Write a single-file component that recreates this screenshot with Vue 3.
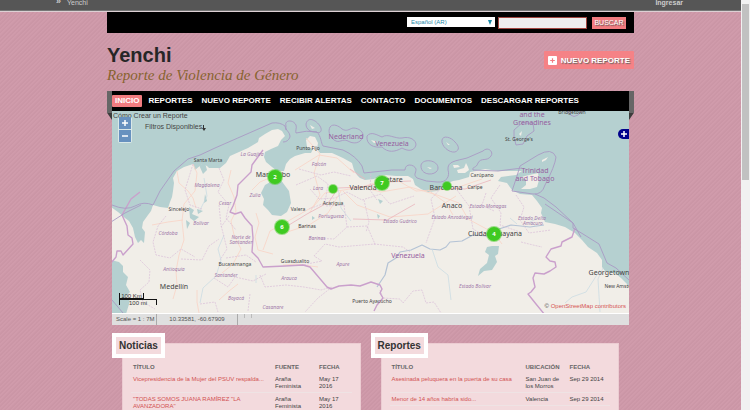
<script setup>
const menu = ['INICIO', 'REPORTES', 'NUEVO REPORTE', 'RECIBIR ALERTAS', 'CONTACTO', 'DOCUMENTOS', 'DESCARGAR REPORTES']

const panels = [
  {
    title: 'Noticias',
    kind: 'news',
    head: ['TÍTULO', 'FUENTE', 'FECHA'],
    rows: [
      ['Vicepresidencia de la Mujer del PSUV respalda...', 'Araña Feminista', 'May 17 2016'],
      ['"TODAS SOMOS JUANA RAMÍREZ "LA AVANZADORA"', 'Araña Feminista', 'May 17 2016']
    ]
  },
  {
    title: 'Reportes',
    kind: 'reports',
    head: ['TÍTULO', 'UBICACIÓN', 'FECHA'],
    rows: [
      ['Asesinada peluquera en la puerta de su casa', 'San Juan de los Morros', 'Sep 29 2014'],
      ['Menor de 14 años habría sido...', 'Valencia', 'Sep 29 2014'],
      ['Asesinada otra mujer...', 'San Juan', 'Sep 18 2014']
    ]
  }
]

const labels = [
  ['state', 252, 156, 'La Guajira'], ['state', 207, 187, 'Magdalena'], ['state', 225, 205, 'Cesar'],
  ['state', 255, 197, 'Zulia'], ['state', 319, 166, 'Falcón'], ['state', 318, 190, 'Lara'],
  ['state', 201, 225, 'Bolívar'], ['state', 168, 235, 'Córdoba'], ['state', 241, 239, 'Norte de'],
  ['state', 241, 244, 'Santander'], ['state', 174, 271, 'Antioquia'], ['state', 226, 277, 'Santander'],
  ['state', 236, 300, 'Boyacá'], ['state', 273, 309, 'Casanare'], ['state', 289, 280, 'Arauca'],
  ['state', 331, 218, 'Portuguesa'], ['state', 317, 240, 'Barinas'], ['state', 343, 266, 'Apure'],
  ['state', 400, 223, 'Estado Guárico'], ['state', 452, 219, 'Estado Anzoátegui'],
  ['state', 488, 208, 'Estado Monagas'], ['state', 532, 220, 'Estado Delta'], ['state', 533, 225, 'Amacuro'],
  ['state', 475, 288, 'Estado Bolívar'],
  ['town', 208, 162, 'Santa Marta'], ['town', 179, 211, 'Sincelejo'], ['town', 308, 150, 'Punto Fijo'],
  ['town', 333, 205, 'Acarigua'], ['town', 298, 211, 'Valera'], ['town', 307, 228, 'Barinas'],
  ['town', 295, 263, 'Guasdualito'], ['town', 235, 266, 'Bucaramanga'], ['town', 372, 303, 'Puerto Ayacucho'],
  ['town', 482, 177, 'Carúpano'], ['town', 475, 189, 'Caripe'], ['town', 519, 141, "St. George's"],
  ['town', 572, 114, 'Bridgetown'], ['town', 624, 288, 'New Amsterdam'],
  ['city', 273, 177, 'Maracaibo'], ['city', 363, 190, 'Valencia'], ['city', 392, 182, 'Petare'],
  ['city', 446, 190, 'Barcelona'], ['city', 452, 208, 'Anaco'], ['city', 495, 236, 'Ciudad Guayana'],
  ['city', 174, 289, 'Medellín'], ['city', 609, 275, 'Georgetown'],
  ['country', 346, 139, 'Nederland'], ['country', 392, 146, 'Venezuela'], ['country', 408, 258, 'Venezuela'],
  ['country', 532, 117, 'and the'], ['country', 532, 125, 'Grenadines'],
  ['country', 535, 173, 'Trinidad'], ['country', 535, 181, 'and Tobago']
]

const clusters = [
  { x: 275, y: 177, r: 8, n: '2' },
  { x: 333, y: 189, r: 5, n: '' },
  { x: 382, y: 183, r: 8, n: '7' },
  { x: 447, y: 186, r: 5, n: '' },
  { x: 494, y: 234, r: 8, n: '4' },
  { x: 282, y: 227, r: 8, n: '6' }
]
</script>

<template>
  <div class="screen">
    <div class="page">
      <div class="account">
        <span class="crumb"><b>»</b><a href="#">Yenchi</a></span>
        <a class="login" href="#">Ingresar</a>
      </div>

      <div class="wrap">
        <form class="tools" @submit.prevent>
          <span class="lang">
            <select aria-label="Idioma">
              <option>Español (AR)</option>
            </select>
          </span>
          <input class="query" type="text" aria-label="Buscar" />
          <button class="search" type="submit">BUSCAR</button>
        </form>

        <header class="header">
          <div>
            <h1>Yenchi</h1>
            <p>Reporte de Violencia de Género</p>
          </div>
          <a class="submit" href="#">
            <svg viewBox="0 0 9 9" aria-hidden="true">
              <rect width="9" height="9" rx="1" fill="#fff" />
              <path d="M4.5 2.2v4.6M2.2 4.5h4.6" stroke="#f27c80" stroke-width="1.2" />
            </svg>
            NUEVO REPORTE
          </a>
        </header>

        <nav class="nav">
          <a v-for="(item, i) in menu" :key="item" href="#" :class="{ on: i === 0 }">{{ item }}</a>
        </nav>

        <main class="main">
          <section class="map">
            <svg class="canvas" viewBox="112 111 517 202" role="img" aria-label="Mapa">
              <rect x="112" y="111" width="517" height="202" fill="#b5d0d0" />
              <path class="land" d="M111 207L118 212 125 218 129 221 133 228 135 237 138 243 141 240 144 243 145 232 142 228 143 222 148 215 151 211 153 205 160 207 168 208 170 202 172 197 173 191 174 183 173 178 177 171 184 167 193 164 195 170 202 164 207 166 209 168 220 168 226 163 230 156 239 152 248 148 258 142 259 138 265 134 272 130 278 129 282 131 285 136 281 140 278 146 271 149 265 152 264 157 266 162 272 167 277 171 284 171 286 164 290 159 295 156 305 153 311 153 313 149 307 147 306 140 310 136 315 137 318 143 317 149 320 153 332 153 343 158 352 163 354 170 357 175 360 178 365 180 374 179 379 176 385 175 396 176 408 176 413 179 415 185 421 189 428 192 437 191 445 188 448 183 453 181 459 180 469 177 470 172 476 171 485 169 498 171 509 171 522 171 516 175 501 177 498 181 507 183 512 190 520 194 532 195 537 201 542 208 541 213 545 222 555 224 565 227 575 233 582 240 588 247 597 253 602 260 602 267 605 271 615 273 621 278 630 287V314H126L130 301 125 297 130 292 126 285 128 277 123 272 123 266 119 262 111 260Z" />
              <path class="land" d="M519 178l6-2 13-3 1 7-2 7-7 2h-9l5-4v-6zM542 160l6-3-2 3-4 2zM453 165l5 0 2 2-6 1zM457 170l7-2 2-5 2 4 1 3-4 3-7 0zM310 125l5 3-3 1zM287 127l2 3zM330 130l3 4zM352 136l4 3zM371 140l3 3 4-1zM427 167l5 1-2 1zM446 142l4 3-2 0zM519 134l3-3-1 5z" />
              <g fill="#b5d0d0">
                <path d="M277 174l-5 7-7 4-4 8 3 6-1 6 5 5 4 5 9 1 6-4 4-9-2-12-6-8zM487 247l5-1 7 0-1 8-3 2 2 6-5 8-8 1-6 5 2-7 7-6 2-8-4-3zM199 165l6-2 2 7-4 4z" />
                <path d="M189 207l5 3-2 4 7 3-5 4-4-3zM186 220l4 3-3 6zM197 209l6 2-5 3zM377 214l3 2-2 3zM342 148l2 1zM312 216l3 2-3 2zM378 199l5 2-3 3zM205 194l2 7-3 2z" />
              </g>
              <g class="road">
                <path d="M193 164l4 9-2 18-11 13-2 17 2 19-5 15-3 16 1 14-4 14M177 171l2 12 9 8 5 7 3 10M231 170l-3 13 6 14 2 14-5 10 3 14 7 14-8 15-11 9M197 290v12l2 11M152 225l16-3 15-2M252 190l8-8 14-6M256 213l3 10-4 14 3 13 15 4M263 250l7-19 20-11 24-14 11-13 37-6 22-7M295 170l24-15 18 3 17 15M306 138l14 16-6 19 6 22-10 17M284 233l25-8 19-12 13-22M343 191l14 14 33 12 38-3 28-18M362 187l19 5 29-5 27 8 22 8 9 16 26 14 8 11M428 190l18 13 7 12M397 180l19 11 37-2 29-10M283 265l13-1 22 3M219 300l10-9 9-7" />
                <path class="red" d="M284 228l23-14 22-12 9-14 24-1 24-5 25-1M445 188l20 1 26-9M350 169l15 10M353 219l34 1 28-16" />
              </g>
              <g class="river">
                <path d="M377 287l8-12 3-12 8-5 4-6 11-2 11-5 8 4 10 1 6-3 4-5 12-1 11-6 14 1 9-6 15-5 19 2 14-2" />
                <path class="thin" d="M200 303l3-15 13-12 5-16-3-11 6-14M432 249l6 18 10 8 3 25M603 268l-5 11 2 33M204 178l3 18-8 16M338 187l3 21 10 13M600 270l-14 22-14 5-7 6M538 218l-8 4 7 5M256 275v8M517 224l-7-6" />
              </g>
              <g class="province">
                <path d="M219 168l5 12-6 12 11 13-3 13 10 12M193 164l-8 26 5 15 12 4M166 216l-8 10-5 16 3 13 14 3 11-9 14 8M140 260l10 10-1 12-9 8 3 12 12 7M181 259l21 1 7-14 10-7M219 205l2 20 6 24-7 11M229 216l-8 11M226 258l20-3 10 7M214 278l14 9 7-10 18 4 13-7M200 304l15-2 3 10M250 294l-2 17M260 275l5 12 21-2 18 2 17 3 11-3-14 11-13 14M299 169l22 6 13-3 17 4M296 185l21-9 11 8-3 19-16 6M326 206l18-1 3 22-13 12-25-1M347 227l20-1 8 18-36 3-14-3-11 12 8 5-20 4M310 189l9 10 16-1 12-6 15 8 19-6 9 10 24-8M371 171l-1 19 7 10M364 200l5 22-3 10M374 244l29 3 7 5M443 186l-12 13 4 19-9 25M457 190l12 16 4 23 14 8M500 185l-9 13 10 15-1 12 20 7M516 195l8 12-4 13 9 13 22-3M521 242l12 3 9 2M380 290l3 8 17 1 3 4 10-12 9-1 4 13 8-1 7 11M486 193l-4 12 12 6" />
              </g>
              <g class="border">
                <path class="thick" d="M263 150l-11 15-1 7-13 13-1 10-4 11-3 6 5 2 6-2 4 6 7 8 1 12-1 14 6 6 5 9 22-1 18-1 7 2 17 20 4 2 8-3 12-1 9 1 11-4 9 3 2 4-2 4 3 5-6 7-3 6" />
                <path class="thick" d="M575 228l-3 9-10 5-1 4-10 3-5 8 4 4 5 1 1 5-6 4-6 3-9-1-2 5 2 9-4 5-3 2 8 10 9 11M111 263l5-6 1-6 4 0 2 4 10-11-1-6-4-3-1-9-5-11 9-16 9-7" />
                <path d="M112 205q14 6 23 1t18-1l7-14 7-10 7-10 14-12 12-4 15-7 57-25q8-1 13 3l1 4" />
                <path d="M286 126C284 120 293 119 296 125C297 128 295 131 296 133Q306 130 317 132C321 136 321 143 323 146L343 150Q356 156 362 166L364 173 392 170 405 170C405 163 414 164 416 169C416 174 413 174 417 178Q426 182 437 182C447 183 450 176 448 170 447 161 456 161 467 158L483 151C488 146 494 152 491 156 487 162 481 157 478 163 476 169 472 166 473 170L498 171 522 168" />
                <path d="M286 126C285 131 290 131 290 137Q288 142 283 142M306 124c2-8 10-4 14 2 3 5 0 8-4 6-5 0-10-2-10-8zM330 127c3-4 9-1 12 2 5 3 7 0 11-1 6 0 11 4 10 9-3 7-10 7-15 4-6-3-8 3-14-1-5-4-6-9-4-13zM367 136c4-5 10-1 15 1 6-4 13 2 20 1 8-2 14 2 14 7-2 7-9 6-14 3-7 4-14 5-20-1-8 1-16-2-15-11zM442 140c1-5 9-3 13 2 4 4 5 8 0 10-6 1-14-6-13-12zM421 165c2-7 17-5 17 3 0 8-18 9-17-3zM520 166l18-11q14-8 18 2-1 9-11 28-3 10-12 9l-21-3 5-15zM535 194l9 4 12 9 17 16 0 5 10 6 16 10 8 19 9 5 13 12M545 204l28 19 8 14M112 300l11 13M111 222l14-9 16-8M514 130l8-7 11 0 1 8-7 5-4 8-7 1-2-8zM568 111q5 11 14 0" />
              </g>
              <text v-for="(l, i) in labels" :key="i" :class="l[0]" :x="l[1]" :y="l[2]">{{ l[3] }}</text>
              <g v-for="(c, i) in clusters" :key="'c' + i" class="cluster">
                <circle :cx="c.x" :cy="c.y" :r="c.r" opacity=".5" />
                <circle :cx="c.x" :cy="c.y" :r="c.r - 1" />
                <text v-if="c.n" :x="c.x" :y="c.y + 2">{{ c.n }}</text>
              </g>
            </svg>

            <div class="guides">
              <a href="#">Cómo Crear un Reporte</a>
              <a class="filters" href="#">Filtros Disponibles
                <svg viewBox="0 0 4 6" aria-hidden="true"><path d="M1 0h1v3h2L2 6 0 3h1z" /></svg>
              </a>
            </div>
            <div class="zoom">
              <button type="button" aria-label="Acercar"><svg viewBox="0 0 8 8"><path d="M4 1v6M1 4h6" /></svg></button>
              <button type="button" aria-label="Alejar"><svg viewBox="0 0 8 8"><path d="M1 4h6" /></svg></button>
            </div>
            <button class="layers" type="button" aria-label="Capas">
              <svg viewBox="0 0 8 8"><path d="M4 1v6M1 4h6" /></svg>
            </button>
            <div class="scale"><span>100 Km</span><span>100 mi</span></div>
            <p class="credit">© <a href="#">OpenStreetMap contributors</a></p>
          </section>

          <div class="status">
            <span class="ratio">Scale = 1 : 7M</span>
            <span class="coords">10.33581, -60.67909</span>
            <i></i><i></i>
          </div>

          <div class="panels">
            <section v-for="p in panels" :key="p.title" class="panel">
              <h2>{{ p.title }}</h2>
              <div class="card">
                <table :class="p.kind">
                  <thead>
                    <tr><th v-for="h in p.head" :key="h">{{ h }}</th></tr>
                  </thead>
                  <tbody>
                    <tr v-for="r in p.rows" :key="r[0]">
                      <td><a href="#">{{ r[0] }}</a></td>
                      <td>{{ r[1] }}</td>
                      <td>{{ r[2] }}</td>
                    </tr>
                  </tbody>
                </table>
              </div>
            </section>
          </div>
        </main>
      </div>
    </div>
    <div class="scrollbar" aria-hidden="true"><div class="thumb"></div></div>
  </div>
</template>

<style>
body {
  margin: 0;
}
</style>

<style scoped>
.screen {
  display: flex;
  height: 100vh;
  overflow: hidden;
  font-family: "Liberation Sans", Arial, sans-serif;
  font-size: 6px;
  line-height: 7px;
  color: #444;
}
.screen * {
  box-sizing: border-box;
}
a {
  color: inherit;
  text-decoration: none;
}
button,
input,
select {
  margin: 0;
  padding: 0;
  border: 0;
  border-radius: 0;
  font-family: inherit;
}
.page {
  flex: 1;
  min-width: 0;
  background: repeating-linear-gradient(135deg, #d09bab 0 1px, #cb96a6 2px 3px);
}
.account {
  display: flex;
  justify-content: space-between;
  height: 12px;
  padding: 0 58px 0 56px;
  background: #565656;
  border-bottom: 1px solid #ddd0d4;
  box-shadow: inset 0 -1px #777;
  color: #ccc;
}
.crumb {
  display: flex;
  gap: 6px;
  font-size: 7px;
  line-height: 5px;
}
.crumb b {
  font-size: 9px;
  line-height: 3px;
}
.login {
  font-size: 7px;
  font-weight: bold;
  line-height: 5px;
}
.wrap {
  max-width: 527px;
  margin: 0 auto;
}
.tools {
  display: flex;
  justify-content: flex-end;
  align-items: flex-start;
  padding: 5px 8px 4px;
  background: #000;
}
.lang {
  position: relative;
  display: flex;
  width: 88px;
  margin-right: 3px;
}
.lang::after {
  content: "";
  position: absolute;
  top: 3px;
  right: 3px;
  width: 4px;
  height: 5px;
  background: #1b8aa8;
  clip-path: polygon(0 0, 100% 0, 50% 100%);
}
.lang select {
  appearance: none;
  width: 100%;
  height: 10px;
  padding: 0 4px;
  background: #fff;
  color: #2388a8;
  font-size: 6px;
  line-height: 10px;
}
.query {
  width: 89px;
  height: 12px;
  margin-right: 5px;
  background: #eee;
  border: 1px solid #a0453f;
  font-size: 7px;
}
.search {
  width: 34px;
  height: 12px;
  background: #f27c80;
  color: #fff;
  font-size: 7px;
  line-height: 12px;
  text-shadow: 1px 1px 1px #555;
}
.header {
  display: flex;
  justify-content: space-between;
  align-items: flex-start;
  padding: 10px 0 8px;
}
h1 {
  margin: 0;
  color: #262626;
  font-size: 20px;
  line-height: 24px;
}
.header p {
  margin: 0;
  color: #87632f;
  font-family: "Liberation Serif", Georgia, serif;
  font-size: 15px;
  font-style: italic;
  line-height: 16px;
}
.submit {
  display: flex;
  align-items: center;
  gap: 4px;
  height: 18px;
  margin-top: 8px;
  padding: 0 4px;
  background: #f58286;
  border-radius: 1px;
  color: #fff;
  font-size: 8px;
  font-weight: bold;
  text-shadow: 1px 1px 1px #666;
}
.submit svg {
  width: 9px;
  height: 9px;
}
.nav {
  position: relative;
  display: flex;
  gap: 3px;
  padding: 4px 5px;
  background: #000;
  z-index: 1;
}
.nav::before,
.nav::after {
  content: "";
  position: absolute;
  top: 0;
  width: 5px;
  height: 29px;
  background: linear-gradient(#666 0 22px, #3c3c3c 22px);
}
.nav::before {
  left: 0;
  clip-path: polygon(0 0, 100% 0, 100% 100%, 0 75%);
}
.nav::after {
  right: 0;
  clip-path: polygon(0 0, 100% 0, 100% 75%, 0 100%);
}
.nav a {
  padding: 0 3px;
  border-radius: 1px;
  color: #fff;
  font-size: 8px;
  font-weight: bold;
  line-height: 12px;
  white-space: nowrap;
}
.nav a.on {
  background: #f27c80;
}
.main {
  padding: 0 5px;
}
.map {
  position: relative;
}
.canvas {
  display: block;
  width: 100%;
}
.canvas path {
  fill: none;
  stroke-linejoin: round;
}
.canvas .land {
  fill: #f1eee8;
}
.canvas g[fill] path {
  fill: inherit;
}
.road path {
  stroke: #f9d3c5;
  stroke-width: 0.8;
}
.road .red {
  stroke: #eab5bc;
}
.river path {
  stroke: #b4c3d5;
  stroke-width: 1.2;
}
.river .thin {
  stroke: #c6dae2;
  stroke-width: 0.7;
}
.province path {
  stroke: #dabed8;
  stroke-width: 0.7;
  stroke-dasharray: 2 1;
}
.border path {
  stroke: #a99ac4;
  stroke-width: 0.9;
}
.border .thick {
  stroke: #caa0cc;
  stroke-width: 1.4;
}
.canvas text {
  font-family: "Noto Sans", sans-serif;
  text-anchor: middle;
}
.canvas .state {
  fill: #a17aaa;
  font-size: 5px;
  font-style: italic;
}
.canvas .town {
  fill: #444;
  font-size: 5px;
}
.canvas .city {
  fill: #444;
  font-size: 7px;
}
.canvas .country {
  fill: #96609f;
  font-size: 7px;
}
.cluster circle {
  fill: #3fca22;
}
.cluster text {
  fill: #fff;
  font-size: 6px;
  font-weight: bold;
}
.guides {
  position: absolute;
  top: 1px;
  left: 1px;
  display: flex;
  flex-direction: column;
  gap: 3px;
  font-size: 7px;
  line-height: 8px;
}
.filters {
  display: flex;
  align-items: flex-end;
  padding-left: 32px;
}
.filters svg {
  width: 4px;
  height: 6px;
}
.filters .filters svg path,
.filters svg path {
  fill: #333;
}
.zoom {
  position: absolute;
  top: 6px;
  left: 6px;
  display: grid;
  gap: 1px;
  padding: 0 1px 1px;
  background: rgba(255, 255, 255, 0.5);
  border-radius: 2px;
}
.zoom button {
  display: flex;
  align-items: center;
  justify-content: center;
  width: 12px;
  height: 12px;
  background: #6791bf;
}
.zoom svg,
.layers svg {
  width: 8px;
  height: 8px;
  stroke: #fff;
  stroke-width: 1.5;
}
.layers {
  position: absolute;
  top: 18px;
  right: 0;
  display: flex;
  align-items: center;
  padding: 1px 1px 1px 2px;
  background: #00008b;
  border-radius: 5px 0 0 5px;
}
.scale {
  position: absolute;
  bottom: 8px;
  left: 7px;
  display: grid;
  justify-items: start;
}
.scale span {
  width: 38px;
  height: 6px;
  border: solid #111;
  border-width: 0 1px;
  color: #333;
  line-height: 6px;
  text-align: center;
}
.scale span:first-child {
  width: 25px;
  border-bottom-width: 1px;
}
.scale span:last-child {
  border-top-width: 1px;
}
.credit {
  position: absolute;
  right: 3px;
  bottom: 3px;
  margin: 0;
}
.credit a {
  color: #d65454;
}
.status {
  display: flex;
  height: 12px;
  background: #dfdfdf;
  border-top: 1px solid #fff;
  color: #555;
  line-height: 10px;
}
.ratio {
  width: 45px;
  padding-left: 4px;
  border-right: 1px solid #aaa;
}
.coords {
  width: 81px;
  border-right: 1px solid #aaa;
  text-align: center;
}
.status i {
  width: 7px;
  height: 4px;
  border-right: 1px solid #bbb;
}
.panels {
  display: grid;
  grid-template-columns: 1fr 1fr;
  padding-top: 8px;
}
.panel h2 {
  position: relative;
  width: max-content;
  margin: 0;
  padding: 0 3px;
  background: #f3dadd;
  border: 4px solid #fff;
  color: #333;
  font-size: 10px;
  line-height: 17px;
}
.card {
  margin: -15px 10px 0;
  padding: 20px 8px;
  background: #f3dadd;
  border: 1px solid #ecccd2;
}
table {
  width: 100%;
  border-collapse: collapse;
  table-layout: fixed;
}
th,
td {
  padding: 3px 8px 2px 2px;
  text-align: left;
  vertical-align: top;
}
th {
  padding-top: 0;
  color: #666;
  white-space: nowrap;
}
tbody tr + tr {
  border-top: 1px solid #efe3e4;
}
td a {
  color: #d25252;
}
.news th:nth-child(1) {
  width: 142px;
}
.reports th:nth-child(1) {
  width: 134px;
}
th:nth-child(2) {
  width: 44px;
}
td:nth-child(1) {
  padding-right: 4px;
}
.reports td:nth-child(n + 2) {
  padding-right: 0;
}
.scrollbar {
  width: 9px;
  padding: 4px 1px;
  background: #f1f1f1;
}
.thumb {
  height: 43vh;
  background: #c1c1c1;
}
</style>
